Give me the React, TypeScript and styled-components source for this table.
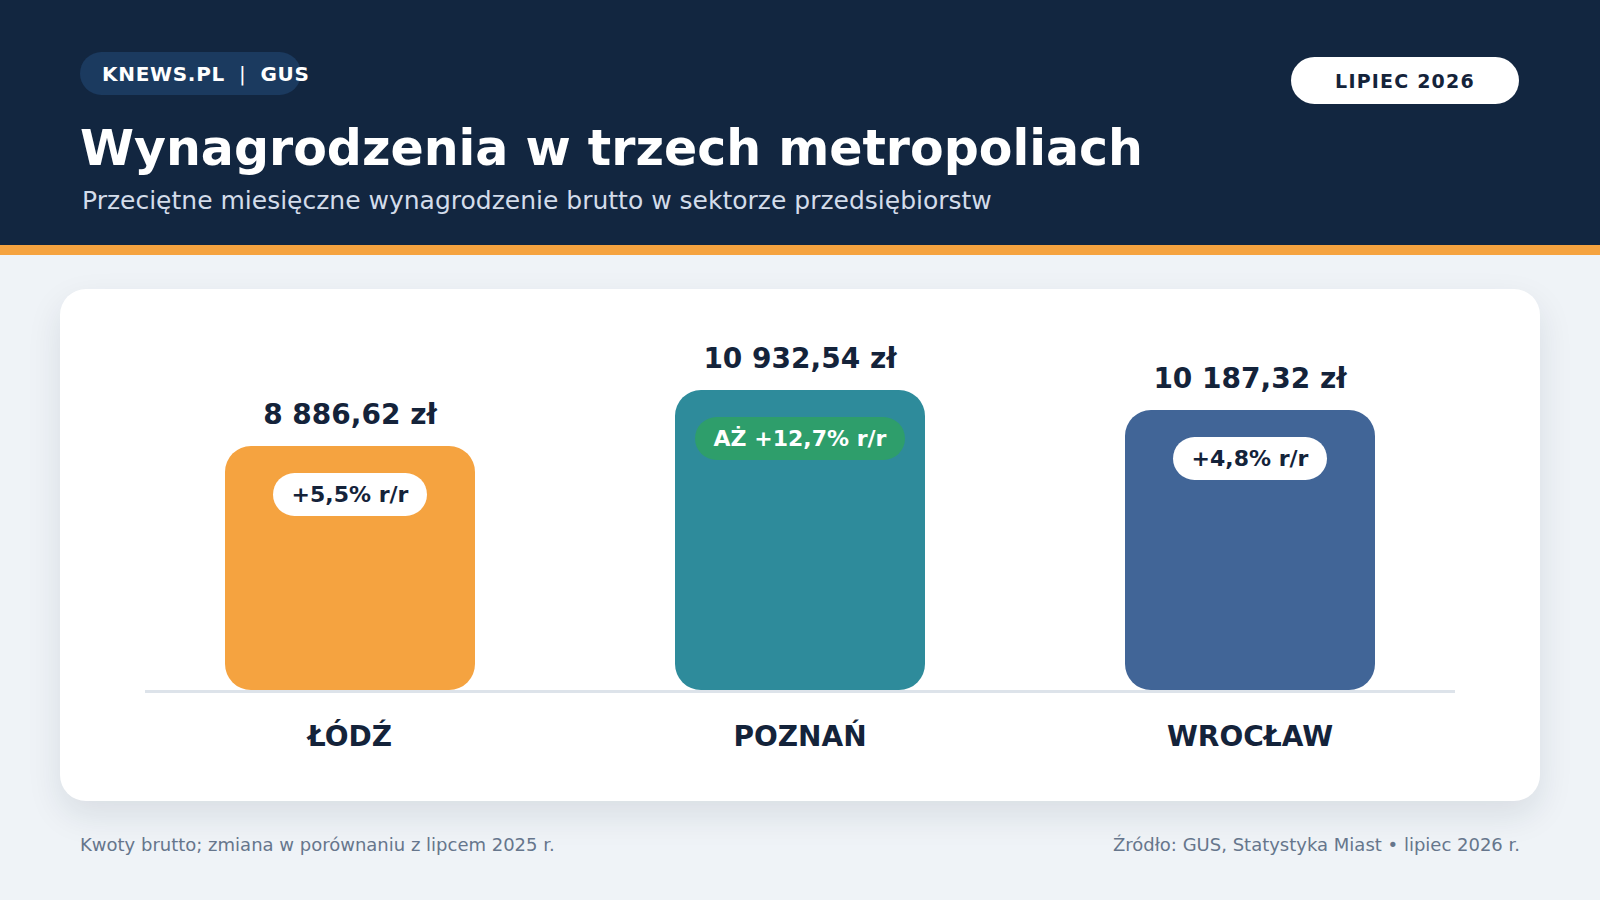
import React from 'react';
import styled, { createGlobalStyle } from 'styled-components';

const GlobalStyle = createGlobalStyle`
  html, body {
    margin: 0;
    padding: 0;
    background: #eff3f7;
  }
  body {
    font-family: "DejaVu Sans", "Liberation Sans", sans-serif;
    color: #14233a;
  }
`;

const Page = styled.div`
  width: 1600px;
  height: 900px;
  overflow: hidden;
  background: #eff3f7;
`;

const Header = styled.header`
  display: flex;
  justify-content: space-between;
  align-items: flex-start;
  padding: 52px 81px 30px 80px;
  background: #122640;
  border-bottom: 10px solid #f5a340;
`;

const HeaderText = styled.div`
  display: flex;
  flex-direction: column;
`;

const SourcePill = styled.div`
  display: flex;
  align-items: center;
  width: 221px;
  height: 43px;
  box-sizing: border-box;
  padding-left: 22px;
  border-radius: 22px;
  background: #1b3a5f;
  color: #ffffff;
  font-size: 20px;
  font-weight: 700;
  letter-spacing: 0.7px;
  white-space: nowrap;
`;

const Divider = styled.span`
  margin: 0 14px;
  font-weight: 400;
`;

const Title = styled.h1`
  margin: 24px 0 0;
  font-size: 49px;
  line-height: 59px;
  font-weight: 700;
  color: #ffffff;
`;

const Subtitle = styled.p`
  margin: 8px 0 0 2px;
  font-size: 25px;
  line-height: 29px;
  color: #d3dcea;
`;

const DatePill = styled.div`
  display: flex;
  align-items: center;
  justify-content: center;
  margin-top: 5px;
  width: 228px;
  height: 47px;
  border-radius: 24px;
  background: #ffffff;
  color: #14233a;
  font-size: 19px;
  font-weight: 700;
  letter-spacing: 1.2px;
`;

const Main = styled.main`
  padding: 34px 60px 0;
`;

const Card = styled.section`
  background: #ffffff;
  border-radius: 26px;
  box-shadow: 0 14px 34px rgba(20, 35, 58, 0.1);
  padding: 53px 85px 47px;
`;

const Columns = styled.div`
  display: grid;
  grid-template-columns: repeat(3, 410px);
  column-gap: 40px;
  align-items: end;
`;

const Column = styled.div`
  display: flex;
  flex-direction: column;
  align-items: center;
`;

const Value = styled.div`
  font-size: 28px;
  line-height: 34px;
  font-weight: 700;
  color: #14233a;
  margin-bottom: 14px;
`;

const Bar = styled.div<{ $color: string }>`
  display: flex;
  flex-direction: column;
  align-items: center;
  width: 250px;
  border-radius: 26px;
  background: ${(p) => p.$color};
`;

const Badge = styled.div<{ $accent?: boolean }>`
  margin-top: 27px;
  height: 43px;
  line-height: 43px;
  padding: 0 19px;
  border-radius: 22px;
  background: ${(p) => (p.$accent ? '#2e9e6b' : '#ffffff')};
  color: ${(p) => (p.$accent ? '#ffffff' : '#14233a')};
  font-size: 22px;
  font-weight: 700;
  white-space: nowrap;
`;

const Axis = styled.div`
  height: 3px;
  background: #dde3ea;
`;

const City = styled.div`
  margin-top: 27px;
  text-align: center;
  font-size: 28px;
  line-height: 34px;
  font-weight: 700;
  color: #14233a;
`;

const Footer = styled.footer`
  display: flex;
  justify-content: space-between;
  padding: 32px 80px 0;
  font-size: 18px;
  line-height: 24px;
  color: #66768c;
`;

type City = {
  name: string;
  value: number;
  label: string;
  change: string;
  color: string;
  accent?: boolean;
};

const cities: City[] = [
  { name: 'ŁÓDŹ', value: 8886.62, label: '8 886,62 zł', change: '+5,5% r/r', color: '#f5a340' },
  { name: 'POZNAŃ', value: 10932.54, label: '10 932,54 zł', change: 'AŻ +12,7% r/r', color: '#2e8b9b', accent: true },
  { name: 'WROCŁAW', value: 10187.32, label: '10 187,32 zł', change: '+4,8% r/r', color: '#416597' },
];

const MAX_BAR = 300;

export default function App() {
  const max = Math.max(...cities.map((c) => c.value));

  return (
    <Page>
      <GlobalStyle />
      <Header>
        <HeaderText>
          <SourcePill>
            KNEWS.PL<Divider>|</Divider>GUS
          </SourcePill>
          <Title>Wynagrodzenia w trzech metropoliach</Title>
          <Subtitle>Przeciętne miesięczne wynagrodzenie brutto w sektorze przedsiębiorstw</Subtitle>
        </HeaderText>
        <DatePill>LIPIEC 2026</DatePill>
      </Header>
      <Main>
        <Card>
          <Columns>
            {cities.map((c) => (
              <Column key={c.name}>
                <Value>{c.label}</Value>
                <Bar $color={c.color} style={{ height: Math.round((c.value / max) * MAX_BAR) }}>
                  <Badge $accent={c.accent}>{c.change}</Badge>
                </Bar>
              </Column>
            ))}
          </Columns>
          <Axis />
          <Columns>
            {cities.map((c) => (
              <City key={c.name}>{c.name}</City>
            ))}
          </Columns>
        </Card>
      </Main>
      <Footer>
        <span>Kwoty brutto; zmiana w porównaniu z lipcem 2025 r.</span>
        <span>Źródło: GUS, Statystyka Miast • lipiec 2026 r.</span>
      </Footer>
    </Page>
  );
}
